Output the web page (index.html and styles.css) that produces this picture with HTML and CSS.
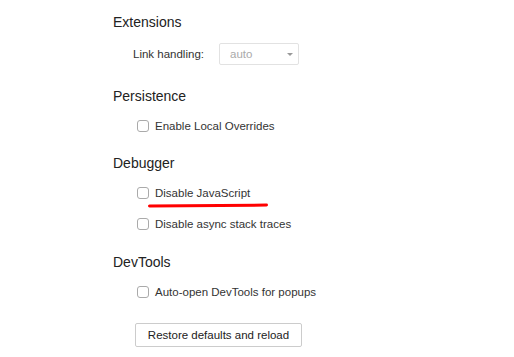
FILE: index.html
```html
<!DOCTYPE html>
<html lang="en">
<head>
    <meta charset="UTF-8">
    <meta name="viewport" content="width=device-width, initial-scale=1.0">
    <title>Preferences</title>
    <link rel="stylesheet" href="styles.css">
</head>
<body>
    <div class="settings">
        <section class="group group-first">
            <h2 class="group-title">Extensions</h2>
            <div class="field">
                <label class="field-label">Link handling:</label>
                <div class="select">auto<span class="select-arrow"></span></div>
            </div>
        </section>

        <section class="group">
            <h2 class="group-title">Persistence</h2>
            <label class="check-row"><input type="checkbox"> Enable Local Overrides</label>
        </section>

        <section class="group group-wide">
            <h2 class="group-title">Debugger</h2>
            <label class="check-row marked"><input type="checkbox"> Disable JavaScript<span class="mark"></span></label>
            <label class="check-row"><input type="checkbox"> Disable async stack traces</label>
        </section>

        <section class="group">
            <h2 class="group-title">DevTools</h2>
            <label class="check-row"><input type="checkbox"> Auto-open DevTools for popups</label>
        </section>

        <div class="actions">
            <button type="button" class="btn">Restore defaults and reload</button>
        </div>
    </div>
</body>
</html>
```

FILE: styles.css
```css
body {
    margin: 0;
    padding: 0;
    background-color: #fff;
    font-family: "Liberation Sans", Arial, sans-serif;
    color: #333;
}
.settings {
    padding: 12px 0 0 113px;
}
.group {
    display: flex;
    flex-direction: column;
    margin-bottom: 17px;
}
.group-first {
    margin-bottom: 21px;
}
.group-wide {
    margin-bottom: 18px;
}
.group-title {
    margin: 0 0 10px 0;
    font-size: 14px;
    font-weight: normal;
    line-height: 20px;
    color: #222;
}
.field {
    display: flex;
    align-items: center;
    padding-left: 20px;
    height: 22px;
    margin-top: 1px;
    font-size: 11.5px;
}
.field-label {
    width: 86px;
}
.select {
    position: relative;
    width: 68px;
    height: 20px;
    line-height: 20px;
    padding-left: 10px;
    border: 1px solid #e2e2e2;
    border-radius: 2px;
    color: #aaa;
    font-size: 11.5px;
}
.select-arrow {
    position: absolute;
    right: 5px;
    top: 9px;
    border-left: 3px solid transparent;
    border-right: 3px solid transparent;
    border-top: 3px solid #999;
}
.check-row {
    position: relative;
    display: flex;
    align-items: center;
    height: 20px;
    padding-left: 24px;
    font-size: 11.5px;
    color: #333;
}
.check-row + .check-row {
    margin-top: 11px;
}
.check-row input {
    -webkit-appearance: none;
    appearance: none;
    width: 12px;
    height: 12px;
    margin: 0 6px 0 0;
    border: 1px solid #aaa;
    border-radius: 3px;
    background-color: #fff;
}
.mark {
    position: absolute;
    left: 35px;
    top: 21px;
    width: 120px;
    height: 3px;
    background-color: #f00;
    border-radius: 2px;
    transform: rotate(-0.4deg);
}
.actions {
    padding: 4px 0 0 22px;
}
.btn {
    width: 167px;
    height: 24px;
    padding: 0;
    font-family: "Liberation Sans", Arial, sans-serif;
    font-size: 11.5px;
    color: #222;
    background-color: #fff;
    border: 1px solid #ccc;
    border-radius: 2px;
}
```
